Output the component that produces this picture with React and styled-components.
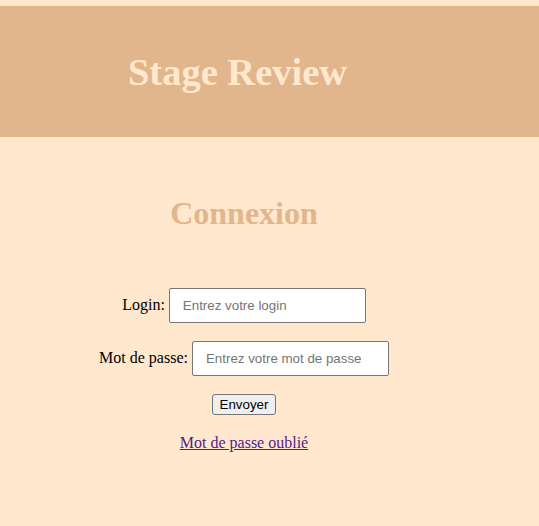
import React from "react";
import styled, { createGlobalStyle } from "styled-components";

const Global = createGlobalStyle`
  html, body { margin: 0; padding: 0; background: #ffe8ce; }
  body { font-family: "Liberation Serif", "Times New Roman", serif; font-size: 16px; color: #000; }
`;

const Header = styled.header`
  margin-top: 6px;
  height: 131px;
  background: #e2b68c;
  display: flex;
  align-items: center;
  justify-content: center;
  padding-right: 64px;
`;

const Title = styled.h1`
  margin: 0;
  font-family: "Liberation Serif", "Times New Roman", serif;
  font-weight: bold;
  font-size: 38.5px;
  color: #ffe8ce;
`;

const Main = styled.main`
  width: 488px;
  display: flex;
  flex-direction: column;
  align-items: center;
  padding-top: 58px;
`;

const Heading = styled.h2`
  margin: 0 0 56px;
  font-family: "Liberation Serif", "Times New Roman", serif;
  font-weight: bold;
  font-size: 32px;
  color: #e2b68c;
`;

const Form = styled.form`
  display: flex;
  flex-direction: column;
  align-items: center;
  gap: 18px;
`;

const Row = styled.div`
  display: flex;
  align-items: baseline;
  justify-content: center;
  gap: 4px;
`;

const Label = styled.label`
  font-size: 16px;
`;

const Input = styled.input`
  box-sizing: border-box;
  width: 197px;
  height: 35px;
  padding: 0 13px;
  border: 1px solid #767676;
  border-radius: 2px;
  background: #fff;
  font-family: "Liberation Sans", Arial, sans-serif;
  font-size: 13.33px;
  &::placeholder { color: #757575; }
`;

const Button = styled.button`
  box-sizing: border-box;
  height: 21px;
  padding: 1px 7px;
  border: 1px solid #767676;
  border-radius: 3px;
  background: #efefef;
  font-family: "Liberation Sans", Arial, sans-serif;
  font-size: 13.33px;
  color: #000;
`;

const Link = styled.a`
  margin-top: 1px;
  font-size: 16px;
  color: #551a8b;
  text-decoration: underline;
`;

export default function App() {
  return (
    <>
      <Global />
      <Header>
        <Title>Stage Review</Title>
      </Header>
      <Main>
        <Heading>Connexion</Heading>
        <Form onSubmit={(e) => e.preventDefault()}>
          <Row>
            <Label htmlFor="login">Login:</Label>
            <Input id="login" placeholder="Entrez votre login" />
          </Row>
          <Row>
            <Label htmlFor="pwd">Mot de passe:</Label>
            <Input id="pwd" type="password" placeholder="Entrez votre mot de passe" />
          </Row>
          <Button type="submit">Envoyer</Button>
          <Link href="#">Mot de passe oublié</Link>
        </Form>
      </Main>
    </>
  );
}
